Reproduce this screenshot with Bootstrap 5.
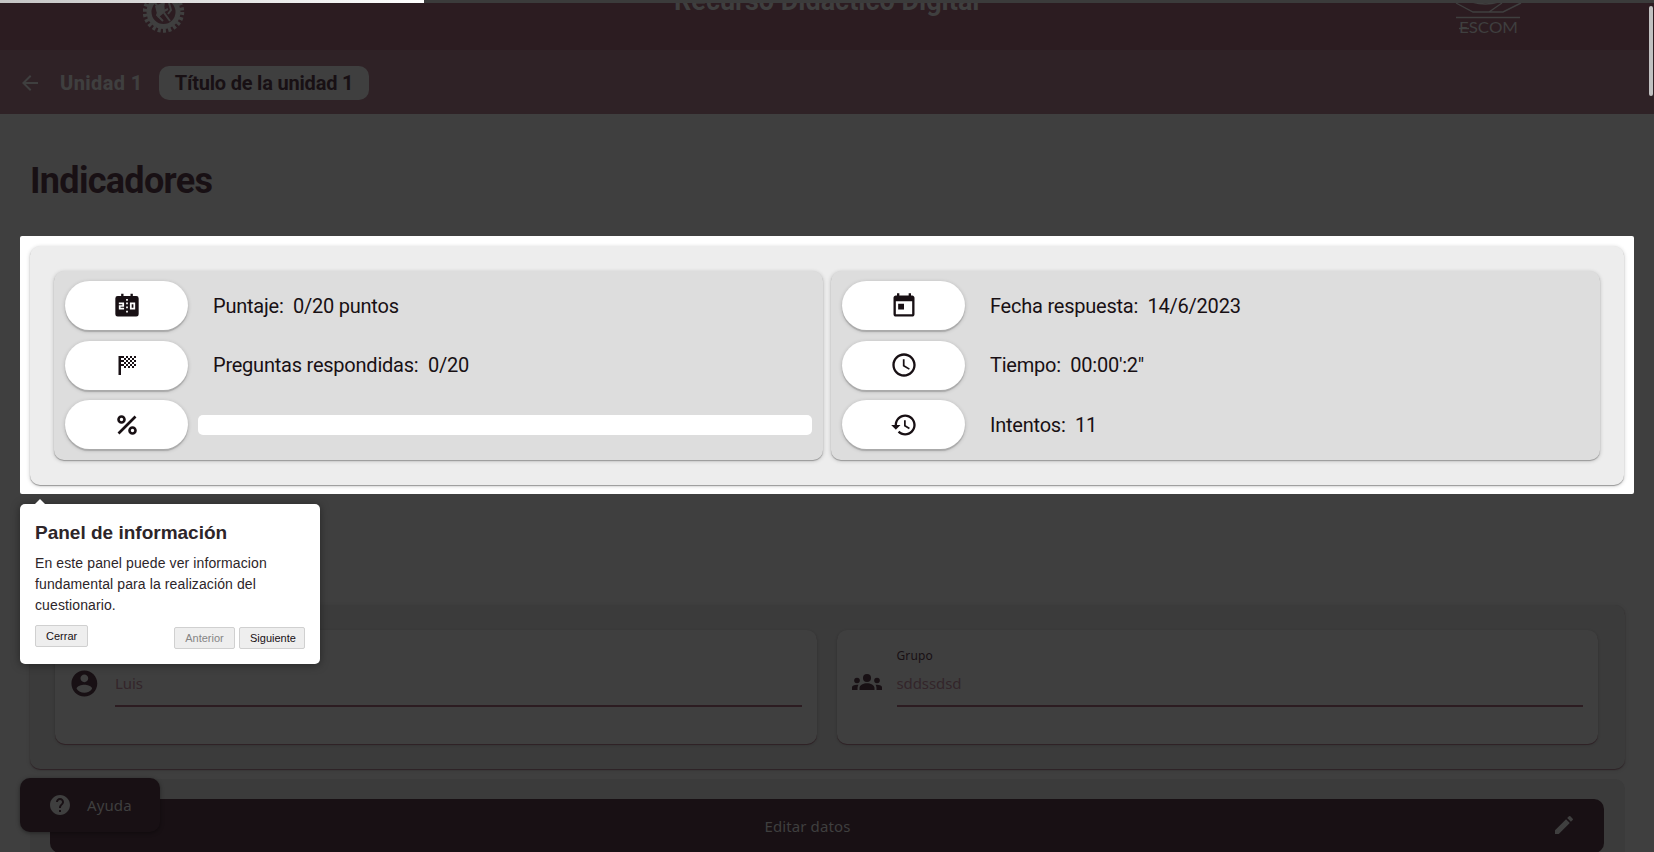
<!DOCTYPE html>
<html lang="es">
<head>
<meta charset="utf-8">
<meta name="viewport" content="width=device-width, initial-scale=1">
<title>Recurso Didáctico Digital</title>
<link rel="stylesheet" href="https://cdn.jsdelivr.net/npm/bootstrap@5.3.0/dist/css/bootstrap.min.css">
<style>
html,body{height:100%;overflow:hidden}
body{font-family:Roboto,"Liberation Sans",sans-serif;background:#3f3f3f;color:#181014}
svg{display:block;flex:none}
.load-track{height:3px;background:#3b3b3b;z-index:5}
.load-fill{height:3px;background:linear-gradient(90deg,#c4c4c4,#fff)}
.scroll-thumb{top:6px;right:1px;width:4px;height:90px;background:#c1c1c1;border-radius:2px;z-index:5}
.top-band{height:50px;background:#2c1c21;color:#3f3f3f}
.top-title{font-size:27px;font-weight:700;line-height:30px;margin-top:-14px;white-space:nowrap}
.logo-side{width:674px}
.gear{margin-left:143px}
.escom{margin-left:auto;margin-right:132px}
.unit-band{height:64px;background:#2f2226;color:#3f3f3f;padding:2px 18px 0}
.unit-name{font-size:20px;font-weight:800;margin-left:18px;width:99px;letter-spacing:.4px;white-space:nowrap}
.unit-chip{background:#3f3f3f;color:#181014;font-size:20px;font-weight:700;letter-spacing:-.2px;border-radius:10px;width:210px;height:34px;white-space:nowrap}
.page-title{font-size:36px;font-weight:700;line-height:44px;letter-spacing:-.7px;padding:45px 0 0 30px;height:122px;margin:0}
.spot{background:#fff;margin:0 20px;height:258px;padding:10px 10px 9px 10px;border-radius:2px}
.panel{background:#ededed;border-radius:10px;height:239px;padding:25px 24px;gap:8px;box-shadow:0 1px 1px #999,0 1px 4px #0003}
.stat-card{background:#ddd;border-radius:10px;height:189px;padding:10px 11px;gap:10.500px;box-shadow:0 1px 1px #999,0 1px 4px #0003}
.pill{width:123px;height:49px;border-radius:25px;background:#fff;box-shadow:0 2px 1px #aaa,0 1px 4px #0003}
.stat-text{font-size:20px;line-height:24px;margin-left:25px;letter-spacing:-.23px;white-space:pre}
.meter{height:20px;border-radius:5px;background:#fff;margin-left:10px}
.dim-panel{background:#3b3b3b;border-radius:10px;margin:0 29px 0 30px}
.form-panel{margin-top:111px;height:164px;padding:25px 27px 0 25px;gap:20px;box-shadow:0 1px 1px #2e2226,0 1px 4px #0002}
.field-card{background:#3f3f3f;border-radius:10px;height:114px;padding:18px 15px 0 15px;box-shadow:0 1px 0 #2f2226,0 1px 3px #0003}
.fld{font-family:"Noto Sans",sans-serif;color:#33252a;font-size:15px;letter-spacing:-.1px;margin-left:15px}
.fld small{display:block;font-size:12px;line-height:16px;color:#181014;letter-spacing:.1px}
.fld .val{height:43px;padding-top:8px;line-height:22px;border-bottom:2px solid #2c1c21}
.edit-panel{margin-top:10px;height:100px;padding:20px 21px 0 20px}
.edit-btn{height:54px;background:#181014;color:#3f3f3f;border-radius:10px;font-family:"Noto Sans",sans-serif;font-size:15px;letter-spacing:.1px;padding-right:39px}
.pencil{right:28px;top:14px}
.help-btn{left:20px;top:778px;width:140px;height:54px;border-radius:10px;background:#181014;color:#3f3f3f;font-family:"Noto Sans",sans-serif;font-size:15px;letter-spacing:.1px;padding-left:28px;gap:15px;box-shadow:0 1px 4px #0006;z-index:3}
.tour{left:20px;top:504px;width:300px;height:160px;background:#fff;border-radius:5px;padding:15px;font-family:"Liberation Sans",Arial,sans-serif;color:#2d2529;box-shadow:0 1px 10px #0006;z-index:4}
.tour::before{content:"";position:absolute;left:15px;top:-5px;border:5px solid transparent;border-top:0;border-bottom-color:#fff}
.tour h2{font-size:19px;font-weight:700;line-height:26px;margin:1px 0 7px}
.tour p{font-size:14px;line-height:21px;margin:0 0 9px;letter-spacing:.11px}
.tour button{font-size:11px;height:22px;line-height:20px;padding:0 10px;border:1px solid #d0d0d0;background:#eee;color:#181014;border-radius:2px;text-align:center}
.tour button:disabled{color:#858585}
.tour .step{margin-top:2px;height:22px}
.tour .step:disabled{width:61px}
.tour .step:enabled{width:66px}
</style>
</head>
<body class="position-relative">
<div class="load-track position-absolute top-0 start-0 w-100"><div class="load-fill" style="width:424px"></div></div>
<div class="scroll-thumb position-absolute"></div>

<header class="top-band d-flex overflow-hidden">
  <div class="logo-side">
    <svg class="gear" width="42" height="34" viewBox="0 0 42 34" fill="none" stroke="#3f3f3f">
      <circle cx="20.500" cy="12" r="14.500" stroke-width="5"/><circle cx="20.500" cy="12" r="18.500" stroke-width="4.500" stroke-dasharray="3 2.280"/>
      <path d="M12 3l5 6-3 6 6 6M21 3l-2 7 8 11M15 14l10-5M26 3l2 7-3 4" stroke-width="2"/><path d="M12 6l9-4 1 10-7 6z" fill="#3f3f3f" stroke="none"/>
    </svg>
  </div>
  <div class="top-title">Recurso Didáctico Digital</div>
  <svg class="escom" width="68" height="36" viewBox="0 0 68 36" fill="none" stroke="#3f3f3f">
    <path d="M2 3l17 9h30l18-9M35 12L48 3M18 2q14 4 26 0M2 17.500h64" stroke-width="1.400"/>
    <path d="M5 28.500h10" stroke-width="1.400"/>
    <text x="5" y="33" font-family="Lato" font-size="15" textLength="59" lengthAdjust="spacingAndGlyphs" fill="#3f3f3f" stroke="none">ESCOM</text>
  </svg>
</header>
<nav class="unit-band d-flex align-items-center">
  <svg width="24" height="24" viewBox="0 0 24 24" fill="#3f3f3f"><path d="M20 11H7.830l5.590-5.590L12 4l-8 8 8 8 1.410-1.410L7.830 13H20z"/></svg>
  <span class="unit-name">Unidad 1</span>
  <span class="unit-chip d-flex align-items-center justify-content-center">Título de la unidad 1</span>
</nav>

<h1 class="page-title">Indicadores</h1>
<section class="spot">
  <div class="panel d-flex">
    <div class="stat-card d-flex flex-column flex-fill w-50">
      <div class="d-flex align-items-center"><div class="pill d-flex align-items-center justify-content-center">
        <svg width="28" height="28" viewBox="0 0 24 24" fill="#181014"><path fill-rule="evenodd" d="M17 1.500V3.500h3a2 2 0 0 1 2 2V19a2 2 0 0 1-2 2H4a2 2 0 0 1-2-2V5.500a2 2 0 0 1 2-2h3v-2h2v2h6v-2zM5 9v1.500h3v.8H5V15h4.500v-1.500h-3v-.8h3V9zM14.500 9v6H19V9zm1.500 1.500h1.500v3H16zM11.250 6v1.500h1.500V6zm0 3v1.500h1.500V9zm0 3.500V14h1.500v-1.500zm0 3.500v1.500h1.500V16z"/></svg></div>
        <span class="stat-text">Puntaje:  0/20 puntos</span></div>
      <div class="d-flex align-items-center"><div class="pill d-flex align-items-center justify-content-center">
        <svg width="28" height="28" viewBox="0 0 28 28" fill="#181014"><path d="M5.500 5h2.500v19H5.500z"/><path d="M8 5h3v2H8zm5 0h2v2h-2zm4 0h2v2h-2zm4 0h2v2h-2zM11 7h2v2h-2zm4 0h2v2h-2zm4 0h2v2h-2zM8 9h3v2H8zm5 0h2v2h-2zm4 0h2v2h-2zm4 0h2v2h-2zM11 11h2v2h-2zm4 0h2v2h-2zm4 0h2v2h-2zM8 13h3v2H8zm5 0h2v2h-2zm4 0h2v2h-2zm4 0h2v2h-2zM11 15h2v2h-2zm4 0h2v2h-2zm4 0h2v2h-2z"/></svg></div>
        <span class="stat-text">Preguntas respondidas:  0/20</span></div>
      <div class="d-flex align-items-center"><div class="pill d-flex align-items-center justify-content-center">
        <svg width="28" height="28" viewBox="0 0 28 28" fill="none" stroke="#181014" stroke-width="2.600"><path d="M5.500 22.500L22.500 5.500"/><circle cx="8.500" cy="8.500" r="3"/><circle cx="19.500" cy="19.500" r="3"/></svg></div>
        <div class="meter flex-fill"></div></div>
    </div>
    <div class="stat-card d-flex flex-column flex-fill w-50">
      <div class="d-flex align-items-center"><div class="pill d-flex align-items-center justify-content-center">
        <svg width="28" height="28" viewBox="0 0 24 24" fill="#181014"><path d="M19 3h-1V1h-2v2H8V1H6v2H5c-1.110 0-1.990.9-1.990 2L3 19c0 1.100.89 2 2 2h14c1.100 0 2-.9 2-2V5c0-1.100-.9-2-2-2zm0 16H5V8h14v11zM7 10h5v5H7z"/></svg></div>
        <span class="stat-text">Fecha respuesta:  14/6/2023</span></div>
      <div class="d-flex align-items-center"><div class="pill d-flex align-items-center justify-content-center">
        <svg width="28" height="28" viewBox="0 0 24 24" fill="#181014"><path d="M11.990 2C6.470 2 2 6.480 2 12s4.470 10 9.990 10C17.520 22 22 17.520 22 12S17.520 2 11.990 2zM12 20c-4.420 0-8-3.580-8-8s3.580-8 8-8 8 3.580 8 8-3.580 8-8 8zm.5-13H11v6l5.250 3.150.75-1.230-4.500-2.670z"/></svg></div>
        <span class="stat-text">Tiempo:  00:00':2"</span></div>
      <div class="d-flex align-items-center"><div class="pill d-flex align-items-center justify-content-center">
        <svg width="28" height="28" viewBox="0 0 24 24" fill="#181014"><path d="M13 3c-4.970 0-9 4.030-9 9H1l3.890 3.890.07.14L9 12H6c0-3.870 3.130-7 7-7s7 3.130 7 7-3.130 7-7 7c-1.930 0-3.680-.79-4.940-2.060l-1.420 1.420C8.270 19.990 10.510 21 13 21c4.970 0 9-4.030 9-9s-4.030-9-9-9zm-1 5v5l4.280 2.540.72-1.210-3.500-2.080V8H12z"/></svg></div>
        <span class="stat-text">Intentos:  11</span></div>
    </div>
  </div>
</section>

<section class="dim-panel form-panel d-flex">
  <div class="field-card d-flex flex-fill w-50">
    <svg style="margin-top:20px" width="30" height="31" viewBox="1 0 23 24" fill="#181014"><path d="M12 2C6.480 2 2 6.480 2 12s4.480 10 10 10 10-4.480 10-10S17.520 2 12 2zm0 3c1.660 0 3 1.340 3 3s-1.340 3-3 3-3-1.340-3-3 1.340-3 3-3zm0 14.200c-2.500 0-4.710-1.280-6-3.220.03-1.990 4-3.080 6-3.080 1.990 0 5.970 1.090 6 3.080-1.290 1.940-3.500 3.220-6 3.220z"/></svg>
    <div class="fld flex-fill"><small>Nombre</small><div class="val">Luis</div></div>
  </div>
  <div class="field-card d-flex flex-fill w-50">
    <svg style="margin-top:18px" width="30" height="36" viewBox="0 0 30 36" fill="#181014"><circle cx="15" cy="12" r="4"/><circle cx="5" cy="14.500" r="2.800"/><circle cx="25" cy="14.500" r="2.800"/><path d="M7.500 24v-2c0-3 4-4.800 7.500-4.800s7.500 1.800 7.500 4.800v2zM0 24v-2.500c0-2 2.500-3 6.500-2.700C5.500 20 5.500 22 5.500 24zM30 24v-2.500c0-2-2.500-3-6.500-2.700 1 1.200 1 3.200 1 5.200z"/></svg>
    <div class="fld flex-fill"><small>Grupo</small><div class="val">sddssdsd</div></div>
  </div>
</section>
<section class="dim-panel edit-panel">
  <div class="edit-btn position-relative d-flex align-items-center justify-content-center">Editar datos
    <svg class="pencil position-absolute" width="24" height="24" viewBox="0 0 24 24" fill="#3f3f3f"><path d="M3 17.250V21h3.750L17.810 9.940l-3.750-3.750L3 17.250zM20.710 7.040a1 1 0 0 0 0-1.410l-2.340-2.340a1 1 0 0 0-1.410 0l-1.830 1.830 3.750 3.750 1.830-1.830z"/></svg>
  </div>
</section>

<div class="help-btn position-absolute d-flex align-items-center">
  <svg width="24" height="24" viewBox="0 0 24 24" fill="#3f3f3f"><path d="M12 2C6.480 2 2 6.480 2 12s4.480 10 10 10 10-4.480 10-10S17.520 2 12 2zm1 17h-2v-2h2v2zm2.070-7.750l-.9.920C13.450 12.900 13 13.500 13 15h-2v-.5c0-1.100.45-2.100 1.170-2.830l1.240-1.260c.37-.36.59-.86.59-1.410 0-1.100-.9-2-2-2s-2 .9-2 2H8c0-2.210 1.790-4 4-4s4 1.790 4 4c0 .88-.36 1.680-.93 2.250z"/></svg>
  <span>Ayuda</span>
</div>

<div class="tour position-absolute">
  <h2>Panel de información</h2>
  <p>En este panel puede ver informacion fundamental para la realización del cuestionario.</p>
  <div class="d-flex"><button class="me-auto">Cerrar</button><button class="step me-1" disabled>Anterior</button><button class="step">Siguiente</button></div>
</div>
<script src="https://cdn.jsdelivr.net/npm/bootstrap@5.3.0/dist/js/bootstrap.bundle.min.js"></script>
</body>
</html>
